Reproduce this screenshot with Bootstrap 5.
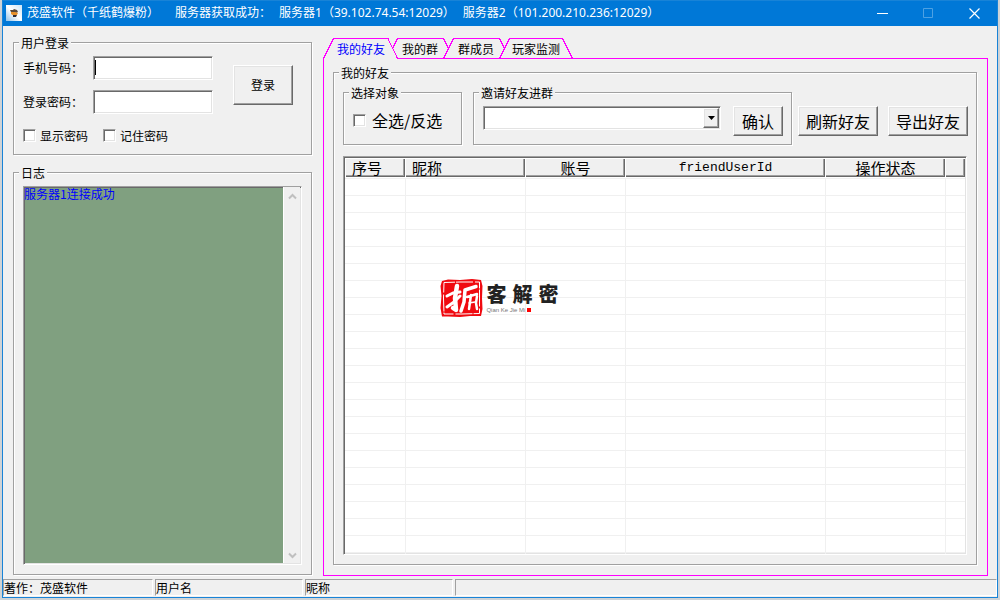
<!DOCTYPE html>
<html lang="zh-CN">
<head>
<meta charset="utf-8">
<meta name="viewport" content="width=device-width, initial-scale=1">
<title>茂盛软件（千纸鹤爆粉）</title>
<link href="https://cdn.jsdelivr.net/npm/bootstrap@5.3.0/dist/css/bootstrap.min.css" rel="stylesheet">
<style>
  :root { --face: #f0f0f0; --mid: #a0a0a0; --dark: #696969; --hot: #ff00ff; }
  body { background: #cfd3d6; color: #000; font: 12px/14px "Liberation Sans", "Noto Sans CJK SC", sans-serif; }
  .cjk, button, label, legend { font-family: "Noto Sans CJK SC", sans-serif; }
  .app-window { min-height: calc(100vh - 2px); margin: 0 2px 2px; border: 1px solid #1883d7; border-top: 0; background: var(--face); }

  .title-bar { height: 26px; background: #0078d7; color: #fff; padding-left: 3px; font-family: "Noto Sans", "Noto Sans CJK SC", sans-serif; box-shadow: inset 0 1px 0 #1883d7; }
  .title-bar button { width: 46px; height: 26px; border: 0; background: none; color: #fff; }
  .title-bar button:disabled { color: #4da1e3; }
  .title-text { margin-left: 5px; }

  .main-area { padding: 10px 9px 3px 10px; gap: 11px; }
  .side-col { flex: 0 0 299px; gap: 11px; padding-bottom: 1px; }

  .group-box { border: 1px solid var(--mid); box-shadow: 1px 1px 0 #fff, inset 1px 1px 0 #fff; padding: 7px 9px 9px; }
  .group-box > legend { font-size: 12px; line-height: 13px; padding: 0 2px; margin: 0 0 0 -4px; background: var(--face); }

  .sunken { border: 1px solid; border-color: var(--mid) #fff #fff var(--mid); box-shadow: inset 1px 1px 0 var(--dark), inset -1px -1px 0 #e3e3e3; border-radius: 0; background: #fff; }
  .raised { border: 1px solid; border-color: #fff var(--dark) var(--dark) #fff; box-shadow: inset -1px -1px 0 var(--mid), inset 1px 1px 0 #e3e3e3; border-radius: 0; background: var(--face); color: #000; padding: 0; }
  .form-grid { display: grid; grid-template-columns: 70px 120px 80px; row-gap: 10px; align-items: center; }
  .form-grid .sunken { width: 100%; height: 24px; padding: 0 3px; outline: 0; }
  .login-btn { grid-column: 3; grid-row: 1 / 3; height: 40px; margin-left: 20px; width: 60px; }
  .text-caret { left: 2px; top: 4px; width: 1px; height: 15px; background: #000; }
  .tick { appearance: none; width: 13px; height: 13px; flex: none; margin: 0; }
  .tick:checked { background: #000 content-box; padding: 2px; }
  .tick-row { gap: 15px; margin-top: 15px; margin-bottom: 3px; }

  .log-text { background: #80a080; color: #0000ff; border: 0; resize: none; padding: 0; font: 12px/14px "Noto Sans CJK SC", sans-serif; outline: 0; box-shadow: inset 1px 1px 0 var(--dark); }
  .log-box { padding: 0 1px 1px 0; }
  .log-scroll { width: 17px; background: var(--face); padding: 6px 0 4px; border-left: 1px solid #fff; }

  .tab-strip { height: 21px; margin: 2px 0 -1px; z-index: 1; }
  .tab-strip button { border: 0; background: none; padding: 1px 0 0; height: 20px; white-space: nowrap; position: relative; font-size: 12px; }
  .tab-first { width: 76px; }
  .tab-short { width: 42px; }
  .tab-mid { width: 70px; }
  .tab-last { width: 50px; }
  .tab-strip .active { color: #0000ff; }
  .tab-body { border: 1px solid var(--hot); padding: 7px 10px 10px 9px; }

  .tool-row { margin-bottom: 11px; }
  .tool-row .group-box { padding-bottom: 8px; }
  .pick-box { flex: 0 0 119px; }
  .pick-box label { font-size: 16px; line-height: 20px; margin-left: 6px; }
  .invite-box { margin: 0 6px 0 11px; }
  .invite-line { gap: 12px; }
  .tool-row button { height: 30px; white-space: nowrap; font-size: 16px; line-height: 20px; }
  .ok-btn { flex: 0 0 50px; margin-right: -1px; }
  .wide-btn { flex: 0 0 80px; margin-top: 20px; }
  .wide-btn + .wide-btn { margin-left: 10px; margin-right: -1px; }
  .combo select { appearance: none; width: 100%; height: 24px; padding: 0 20px 0 4px; display: block; outline: 0; }
  .combo-arrow { right: 2px; top: 2px; width: 16px; height: 20px; pointer-events: none; }

  .list-view { flex: 1 1 0; min-height: 120px; overflow: hidden; padding: 1px; }
  .list-view table { width: 100%; table-layout: fixed; border-collapse: separate; border-spacing: 0; }
  .list-view th { height: 20px; padding: 0 6px 1px 7px; border-bottom: 1px solid #fff; background: var(--face); font: 15px/15px "Noto Sans CJK SC", sans-serif; box-shadow: inset 1px 1px 0 #fff, inset -1px -1px 0 var(--dark), inset -2px -2px 0 var(--mid); white-space: nowrap; }
  .list-view th.latin { font: 13px/15px "Liberation Mono", monospace; }
  .list-view td { height: 17px; padding: 0; border-top: 1px solid #f0f0f0; }
  .list-view td + td { border-left: 1px solid #f0f0f0; }

  .stamp { left: 15.5%; top: 121px; gap: 3px; pointer-events: none; }
  .stamp-name { gap: 6px; font: 900 20px/24px "Noto Sans CJK SC", sans-serif; color: #222; }
  .stamp-sub { font: 6px/8px "Liberation Sans", sans-serif; color: #777; gap: 2px; }
  .stamp-dot { width: 4px; height: 4px; background: #f00; }

  .status-bar { gap: 2px; height: 18px; padding-bottom: 1px; }
  .status-bar > div { border: 1px solid; border-color: var(--mid) #fff #fff var(--mid); padding: 1px 0 0; line-height: 14px; white-space: nowrap; }
  .status-first { flex: 0 0 150px; }
  .status-next { flex: 0 0 148px; }
</style>
</head>
<body>
<div class="app-window d-flex flex-column">
  <header class="title-bar d-flex align-items-center">
    <svg width="16" height="16" viewBox="0 0 16 16" aria-hidden="true">
      <defs><linearGradient id="sky" x1="0" y1="1" x2="1" y2="0"><stop offset="0" stop-color="#8fc2ea"/><stop offset=".5" stop-color="#fff"/><stop offset="1" stop-color="#cfe4f6"/></linearGradient></defs>
      <rect width="16" height="16" fill="url(#sky)"/>
      <path d="M4 5l3 0 1-1 3 1 1 2-2 1-2-1-3 0z" fill="#5a4a3c"/>
      <path d="M5 7l4 0 3 1-1 2-3 1-3-2z" fill="#e8922c"/>
      <path d="M7 10l4 0-1 2-3 0z" fill="#2c2c38"/>
    </svg>
    <div class="title-text d-flex flex-fill text-nowrap">
      <span>茂盛软件（千纸鹤爆粉）</span><span class="ms-3">服务器获取成功：</span><span class="ms-2">服务器1（39.102.74.54:12029）</span><span class="ms-2">服务器2（101.200.210.236:12029）</span>
    </div>
    <button type="button" class="d-flex align-items-center justify-content-center" aria-label="最小化"><svg width="11" height="11"><path d="M0 5.5h11" stroke="currentColor"/></svg></button>
    <button type="button" class="d-flex align-items-center justify-content-center" aria-label="最大化" disabled><svg width="11" height="11"><path d="M.5.5h9v9h-9z" fill="none" stroke="currentColor"/></svg></button>
    <button type="button" class="d-flex align-items-center justify-content-center" aria-label="关闭"><svg width="11" height="11"><path d="M.5.5l10 10M10.5.5l-10 10" stroke="currentColor" stroke-width="1.2"/></svg></button>
  </header>

  <main class="main-area d-flex flex-fill">
    <div class="side-col d-flex flex-column">
      <form>
        <fieldset class="group-box">
          <legend class="float-none w-auto">用户登录</legend>
          <div class="form-grid">
            <label for="phone">手机号码：</label>
            <div class="position-relative"><input id="phone" type="text" class="sunken d-block"><span class="text-caret position-absolute"></span></div>
            <label for="pass">登录密码：</label>
            <div><input id="pass" type="password" class="sunken d-block"></div>
            <button type="button" class="raised login-btn">登录</button>
          </div>
          <div class="tick-row d-flex">
            <div class="d-flex align-items-center"><input id="show" type="checkbox" class="tick sunken"><label for="show" class="ms-1 lh-1">显示密码</label></div>
            <div class="d-flex align-items-center"><input id="keep" type="checkbox" class="tick sunken"><label for="keep" class="ms-1 lh-1">记住密码</label></div>
          </div>
        </fieldset>
      </form>
      <fieldset class="group-box d-flex flex-column flex-fill">
        <legend class="float-none w-auto align-self-start">日志</legend>
        <div class="sunken log-box d-flex flex-fill">
          <textarea class="log-text flex-fill" readonly aria-label="日志">服务器1连接成功</textarea>
          <div class="log-scroll d-flex flex-column justify-content-between align-items-center">
            <svg width="9" height="7"><path d="M1 5.5l3.500-3.500 3.500 3.500" fill="none" stroke="#bfbfbf" stroke-width="2"/></svg>
            <svg width="9" height="7"><path d="M1 1.500l3.500 3.500 3.500-3.500" fill="none" stroke="#bfbfbf" stroke-width="2"/></svg>
          </div>
        </div>
      </fieldset>
    </div>

    <section class="d-flex flex-column flex-fill">
      <nav class="tab-strip d-flex position-relative" role="tablist">
        <svg class="position-absolute top-0 start-0" width="260" height="21" aria-hidden="true">
          <path d="M1 20.500H74" stroke="#f0f0f0"/>
          <g fill="none" stroke="#ff00ff" shape-rendering="crispEdges">
            <path d="M.5 20.500L10.500.5H65L74.500 20.500"/>
            <path d="M69.500 10.500L74.500.5H120.500L125.500 10.500"/>
            <path d="M120.500 20.500L130.500.5H176.500L181.500 10.500"/>
            <path d="M176.500 20.500L186.500.5H239.500L249.500 20.500"/>
          </g>
        </svg>
        <button type="button" role="tab" aria-selected="true" class="tab-first active">我的好友</button>
        <button type="button" role="tab" aria-selected="false" class="tab-short">我的群</button>
        <button type="button" role="tab" aria-selected="false" class="tab-mid">群成员</button>
        <button type="button" role="tab" aria-selected="false" class="tab-last">玩家监测</button>
      </nav>
      <div class="tab-body d-flex flex-fill">
        <fieldset class="group-box d-flex flex-column flex-fill">
          <legend class="float-none w-auto align-self-start">我的好友</legend>
          <div class="d-flex flex-column h-100">
            <div class="tool-row d-flex">
              <fieldset class="group-box pick-box">
                <legend class="float-none w-auto">选择对象</legend>
                <div class="d-flex align-items-center pt-1"><input id="all" type="checkbox" class="tick sunken"><label for="all" class="text-nowrap">全选/反选</label></div>
              </fieldset>
              <fieldset class="group-box invite-box flex-fill">
                <legend class="float-none w-auto">邀请好友进群</legend>
                <div class="invite-line d-flex">
                  <div class="combo position-relative flex-fill">
                    <select class="sunken" aria-label="邀请好友进群"><option></option></select>
                    <span class="combo-arrow raised position-absolute d-flex align-items-center justify-content-center"><svg width="7" height="4"><path d="M0 0h7L3.500 4z"/></svg></span>
                  </div>
                  <button type="button" class="raised ok-btn">确认</button>
                </div>
              </fieldset>
              <button type="button" class="raised wide-btn">刷新好友</button>
              <button type="button" class="raised wide-btn">导出好友</button>
            </div>
            <div class="list-view sunken position-relative">
              <table>
                <colgroup><col style="width:60px"><col style="width:120px"><col style="width:100px"><col style="width:200px"><col style="width:120px"><col></colgroup>
                <thead><tr><th>序号</th><th>昵称</th><th class="text-center">账号</th><th class="text-center latin">friendUserId</th><th class="text-center">操作状态</th><th></th></tr></thead>
                <tbody id="rows"></tbody>
              </table>
              <div class="stamp position-absolute d-flex">
                <svg width="43" height="40" viewBox="0 0 43 40" aria-hidden="true">
                  <path d="M2 3L8 1.500 20 2 32 1 41 2 42.500 8 42 20 42.500 31 41 38 30 38 20 39 8 38.500 2 38.500 .5 30 1.500 18 .5 8z" fill="#f00a10"/>
                  <path d="M4 4.500L20 4 39.500 4 39.500 20 39.500 35.500 22 36 4 36 3.500 20z" fill="none" stroke="#fff" stroke-dasharray="11 1 17 2"/>
                  <g fill="none" stroke="#fff" stroke-linecap="round" stroke-linejoin="round">
                    <path d="M17 8L15 20 16 32 13 30" stroke-width="4.500"/>
                    <path d="M7 18L13 15 20 14M7 29L14 24 20 18" stroke-width="3"/>
                    <path d="M25 12L24 24 21 33M25 12L36 8.500" stroke-width="3.500"/>
                    <path d="M27 19L37 16M31 17L29 31M37 18L36 25 37 31" stroke-width="2.500"/>
                    <path d="M29 25L35 24" stroke-width="1.500"/>
                  </g>
                </svg>
                <div class="d-flex flex-column pt-1">
                  <div class="stamp-name d-flex"><span>客</span><span>解</span><span>密</span></div>
                  <div class="stamp-sub d-flex align-items-center"><span>Qian Ke Jie Mi</span><span class="stamp-dot"></span></div>
                </div>
              </div>
            </div>
          </div>
        </fieldset>
      </div>
    </section>
  </main>

  <footer class="status-bar d-flex cjk">
    <div class="status-first">著作：茂盛软件</div>
    <div class="status-next">用户名</div>
    <div class="status-next">昵称</div>
    <div class="flex-fill"></div>
  </footer>
</div>
<script src="https://cdn.jsdelivr.net/npm/bootstrap@5.3.0/dist/js/bootstrap.bundle.min.js"></script>
<script>
  // Empty grid rows fill the list below its header.
  document.getElementById('rows').innerHTML = ('<tr>' + '<td></td>'.repeat(6) + '</tr>').repeat(23);
</script>
</body>
</html>
